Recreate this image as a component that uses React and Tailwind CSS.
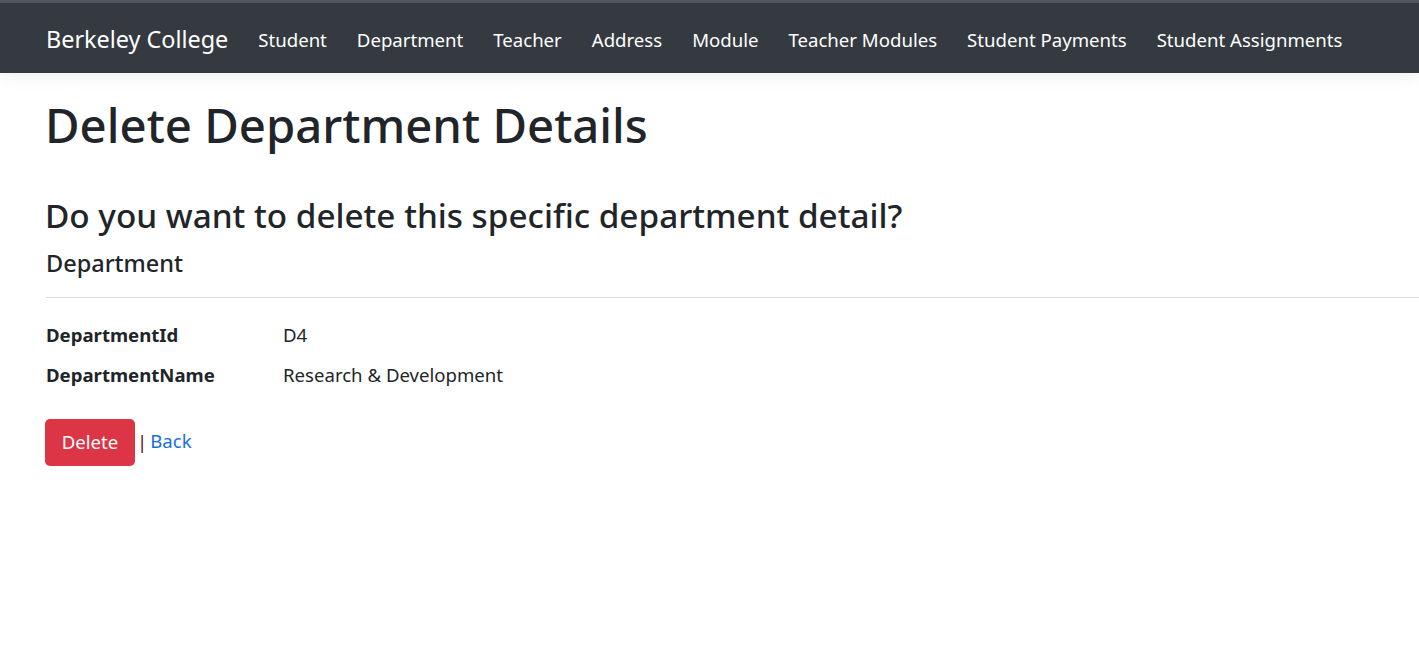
const NAV_LINKS = [
  'Student', 'Department', 'Teacher', 'Address', 'Module',
  'Teacher Modules', 'Student Payments', 'Student Assignments',
]

const FIELDS = [
  { label: 'DepartmentId',   value: 'D4' },
  { label: 'DepartmentName', value: 'Research & Development' },
]

export default function App() {
  return (
    <div className="min-h-screen bg-white text-[#212529] font-['Noto_Sans',sans-serif]">
      {/* Navbar */}
      <header className="border-t-[3px] border-[#54585d]">
        <nav className="h-[70px] bg-[#343a40] flex items-center pl-[46px] pt-[3px] shadow-[0_5px_15px_rgba(0,0,0,0.06)]">
          <a className="text-white text-[23.4px] mr-[30px] cursor-pointer">Berkeley College</a>
          <ul className="flex items-center gap-[30px]">
            {NAV_LINKS.map(l => (
              <li key={l} className="text-white text-[18.6px] cursor-pointer">{l}</li>
            ))}
          </ul>
        </nav>
      </header>

      <main className="pl-[46px] pt-[24px]">
        <h1 className="text-[47.3px] font-medium leading-[1.2] mb-[42px] -ml-px">Delete Department Details</h1>

        <h3 className="text-[33.3px] font-medium leading-[1.2] mb-[13px] -ml-px">
          Do you want to delete this specific department detail?
        </h3>
        <div>
          <h4 className="text-[23.5px] font-medium leading-[1.2]">Department</h4>
          <hr className="mt-[20px] mb-[17px] border-0 border-t border-[#dedede]" />
          <dl className="flex flex-col">
            {FIELDS.map(f => (
              <div key={f.label} className="flex h-[40px] items-center text-[18.6px]">
                <dt className="w-[237px] font-bold">{f.label}</dt>
                <dd>{f.value}</dd>
              </div>
            ))}
          </dl>
        </div>

        <div className="flex items-center mt-[24px]">
          <button className="h-[47px] w-[90px] rounded-[5px] bg-[#dc3545] text-white text-[18.6px] -ml-px">
            Delete
          </button>
          <span className="ml-[2px] text-[18.6px] text-[#5a1616]">|</span>
          <a className="ml-[3px] text-[18.6px] text-[#1a6fd6] cursor-pointer -mt-[3px]">Back</a>
        </div>
      </main>
    </div>
  )
}
